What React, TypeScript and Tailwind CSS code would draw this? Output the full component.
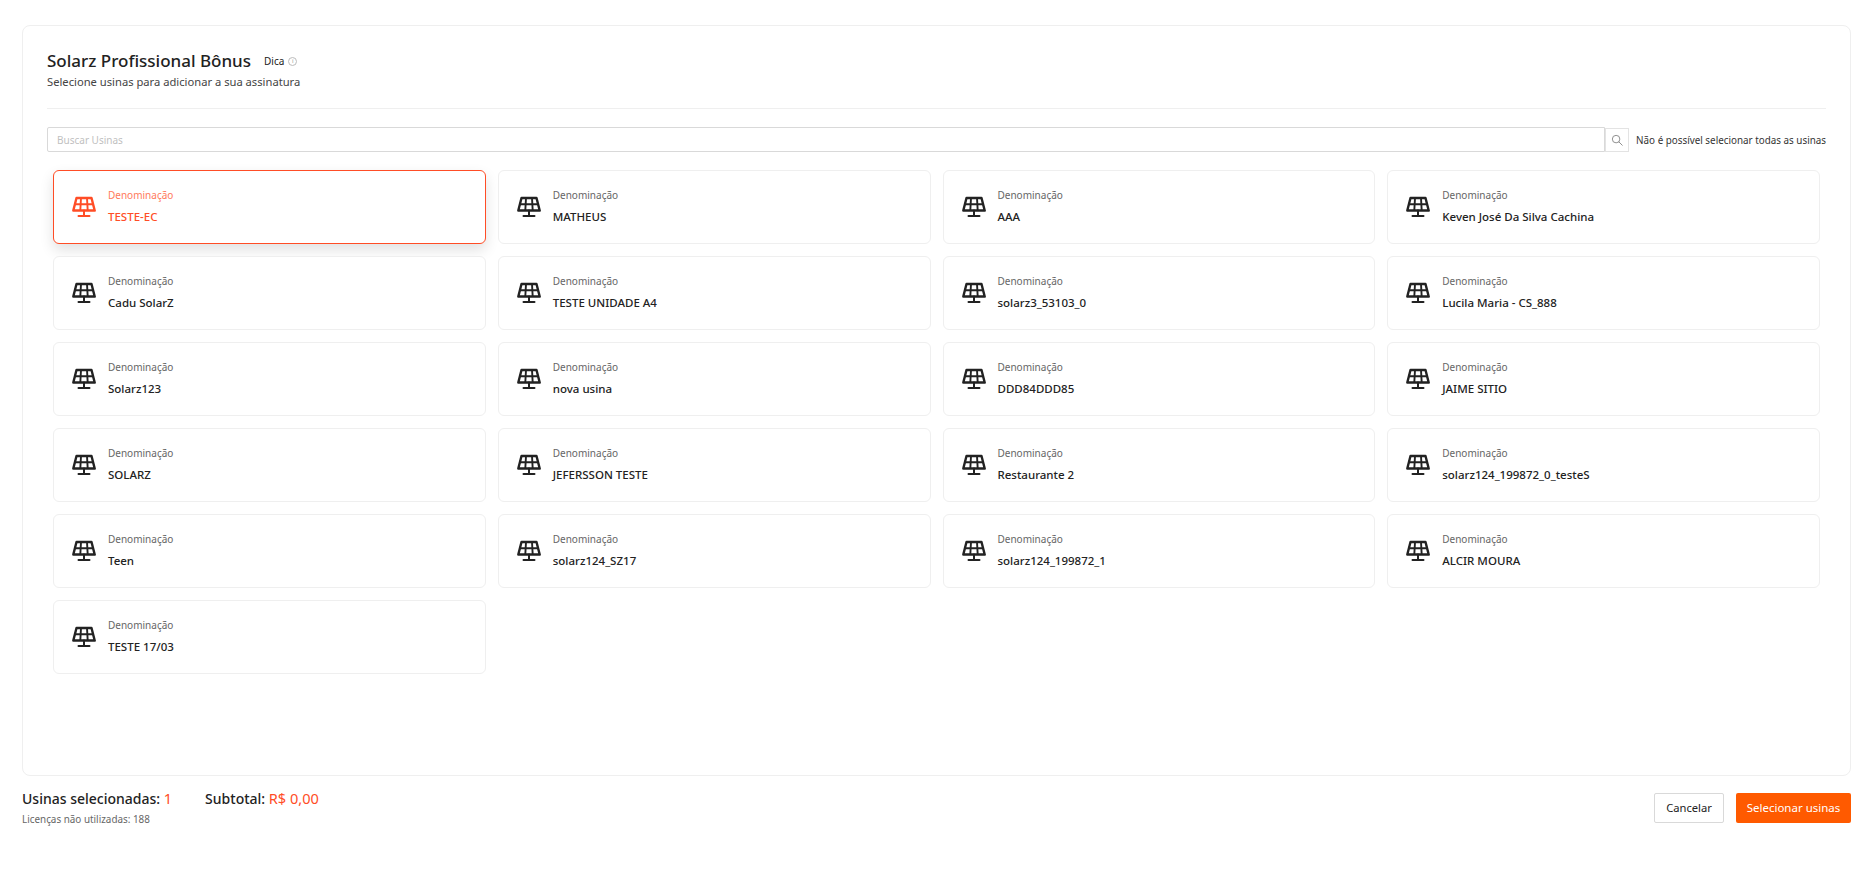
const plants = [
  'TESTE-EC',
  'MATHEUS',
  'AAA',
  'Keven José Da Silva Cachina',
  'Cadu SolarZ',
  'TESTE UNIDADE A4',
  'solarz3_53103_0',
  'Lucila Maria - CS_888',
  'Solarz123',
  'nova usina',
  'DDD84DDD85',
  'JAIME SITIO',
  'SOLARZ',
  'JEFERSSON TESTE',
  'Restaurante 2',
  'solarz124_199872_0_testeS',
  'Teen',
  'solarz124_SZ17',
  'solarz124_199872_1',
  'ALCIR MOURA',
  'TESTE 17/03',
]

function SolarIcon({ className }: { className: string }) {
  return (
    <svg viewBox="0 0 24 22" className={className} fill="none" stroke="currentColor" strokeWidth="2.4" strokeLinejoin="round">
      <path d="M4.5 2h15l3.2 12.5H1.3z" />
      <path d="M2 8.2h20M9 2 8.3 14.5M15 2l.7 12.5" strokeWidth="1.9" />
      <path d="M12 14.5v5M6.5 20h11" strokeLinecap="round" strokeWidth="2" />
    </svg>
  )
}

function PlantCard({ name, selected }: { name: string; selected: boolean }) {
  return (
    <div
      className={`h-[74px] flex items-center pl-[18px] rounded-md border bg-white ${
        selected ? 'border-[#ff4d26] shadow-[0_6px_14px_rgba(0,0,0,0.12)]' : 'border-[#efefef]'
      }`}
    >
      <SolarIcon className={`w-[24px] h-[22px] shrink-0 ${selected ? 'text-[#ff4d26]' : 'text-[#222222]'}`} />
      <div className="ml-[12px] -mt-[2px]">
        <div className={`text-[10px] leading-[16px] ${selected ? 'text-[#ff7a5c]' : 'text-[#666666]'}`}>Denominação</div>
        <div className={`mt-[5px] text-[11.5px] leading-[18px] font-medium ${selected ? 'text-[#ff4d26]' : 'text-[#222222]'}`}>
          {name}
        </div>
      </div>
    </div>
  )
}

export default function App() {
  return (
    <div className="h-[880px] bg-white pt-[25px] pl-[22px] pr-[20px] font-['Noto_Sans',sans-serif] text-[#222222]">
      <div className="h-[751px] rounded-lg border border-[#efefef] bg-white px-[24px] pt-[23px]">
        <div className="flex items-center h-[24px]">
          <h1 className="text-[17px] leading-[24px] font-medium">Solarz Profissional Bônus</h1>
          <span className="ml-[13px] text-[10px] leading-[16px]">Dica</span>
          <span className="ml-[4px] flex items-center justify-center w-[9px] h-[9px] rounded-full border border-[#bbbbbb] text-[6px] leading-none text-[#999999]">
            i
          </span>
        </div>
        <p className="text-[11.2px] leading-[16px] mt-[1px] text-[#444444]">Selecione usinas para adicionar a sua assinatura</p>
        <div className="h-px bg-[#efefef] mt-[18px]" />

        <div className="flex items-center mt-[18px]">
          <input
            placeholder="Buscar Usinas"
            className="flex-1 h-[25px] px-[9px] border border-[#d9d9d9] text-[10px] outline-none placeholder:text-[#bfbfbf] rounded-l-[2px]"
          />
          <button className="w-[24px] h-[24px] flex items-center justify-center border border-[#e3e3e3] bg-white">
            <svg viewBox="0 0 16 16" className="w-[12px] h-[12px]" fill="none" stroke="#8c8c8c" strokeWidth="1.3">
              <circle cx="6.8" cy="6.8" r="5" />
              <path d="M10.5 10.5 15 15" strokeLinecap="round" />
            </svg>
          </button>
          <span className="ml-[7px] text-[9.85px] leading-[16px] text-[#333333] whitespace-nowrap">
            Não é possível selecionar todas as usinas
          </span>
        </div>

        <div className="grid grid-cols-4 gap-x-[12px] gap-y-[12px] px-[6px] mt-[18px]">
          {plants.map((name, i) => (
            <PlantCard key={name} name={name} selected={i === 0} />
          ))}
        </div>
      </div>

      <div className="flex justify-between mt-[11px]">
        <div>
          <div className="flex items-center h-[24px] text-[14px] font-medium">
            <span>
              Usinas selecionadas: <span className="text-[#ff4d26] font-normal text-[14.6px]">1</span>
            </span>
            <span className="ml-[33px]">
              Subtotal: <span className="text-[#ff4d26] font-normal text-[14.6px]">R$ 0,00</span>
            </span>
          </div>
          <div className="text-[9.9px] leading-[14px] mt-[1px] text-[#666666]">Licenças não utilizadas: 188</div>
        </div>
        <div className="flex gap-[12px] mt-[6px]">
          <button className="w-[70px] h-[30px] border border-[#d9d9d9] rounded-[2px] bg-white text-[11.2px] text-[#222222]">
            Cancelar
          </button>
          <button className="w-[115px] h-[30px] rounded-[2px] bg-[#ff5a00] text-[11.5px] text-white">Selecionar usinas</button>
        </div>
      </div>
    </div>
  )
}
